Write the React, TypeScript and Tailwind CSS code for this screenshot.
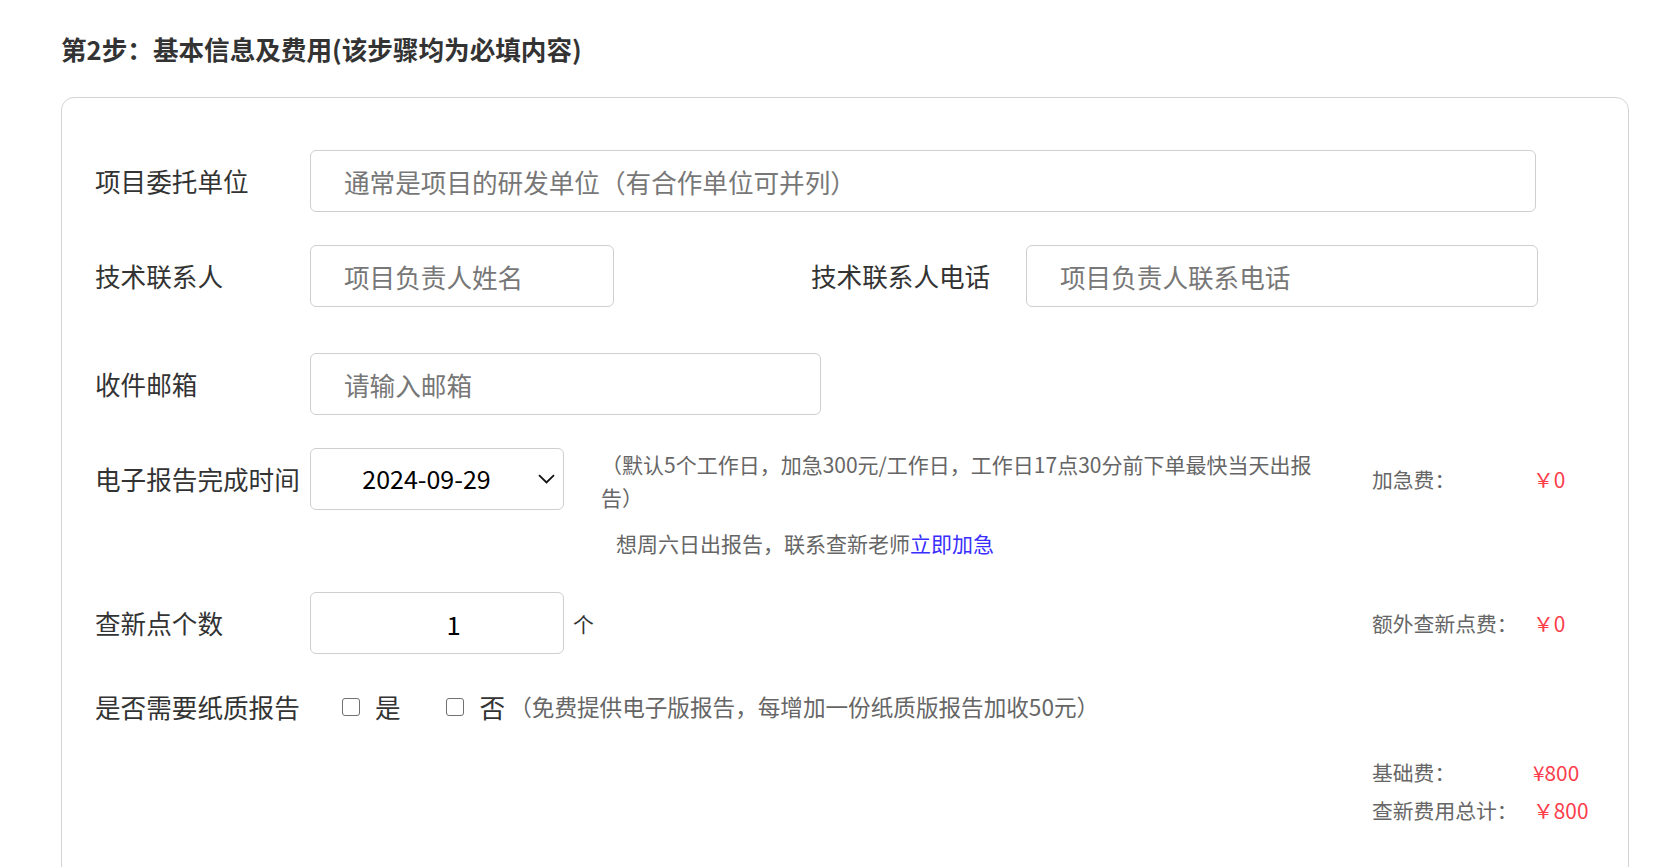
import React from "react";

const Label = ({ children }: { children: React.ReactNode }) => (
  <div className="w-[215px] shrink-0 text-[25.6px] text-[#333]">{children}</div>
);

const Field = ({ placeholder, width }: { placeholder: string; width: string }) => (
  <input
    type="text"
    placeholder={placeholder}
    className={`${width} h-[62px] shrink-0 rounded-[6px] border border-[#cfcfcf] bg-white pl-[33px] text-[25.6px] text-[#333] outline-none placeholder:text-[#777]`}
  />
);

const Fee = ({ label, value }: { label: string; value: string }) => (
  <div className="flex w-[256px] shrink-0 items-center text-[20.8px] leading-[38px]">
    <span className="w-[161px] shrink-0 text-[#666]">{label}</span>
    <span className="text-[#fc3d4c]">{value}</span>
  </div>
);

const Box = () => (
  <span className="inline-block h-[18px] w-[18px] shrink-0 rounded-[3px] border-[1.5px] border-[#707070] bg-white" />
);

export default function App() {
  return (
    <div className="min-h-screen bg-white font-['Noto_Sans_CJK_SC','Noto_Sans',sans-serif] text-[#333]">
      <div className="pl-[61px] pt-[30px]">
        <h2 className="text-[25.6px] font-bold leading-[38px] text-[#333]">
          第2步：基本信息及费用(该步骤均为必填内容)
        </h2>

        <div className="mt-[29px] h-[820px] w-[1568px] rounded-[13px] border border-[#d4d4d4] pl-[33px] pt-[52px]">
          {/* 委托单位 */}
          <div className="flex h-[62px] items-center">
            <Label>项目委托单位</Label>
            <Field placeholder="通常是项目的研发单位（有合作单位可并列）" width="w-[1226px]" />
          </div>

          {/* 联系人 */}
          <div className="mt-[33px] flex h-[62px] items-center">
            <Label>技术联系人</Label>
            <Field placeholder="项目负责人姓名" width="w-[304px]" />
            <div className="ml-[197px]">
              <Label>技术联系人电话</Label>
            </div>
            <Field placeholder="项目负责人联系电话" width="w-[512px]" />
          </div>

          {/* 邮箱 */}
          <div className="mt-[46px] flex h-[62px] items-center">
            <Label>收件邮箱</Label>
            <Field placeholder="请输入邮箱" width="w-[511px]" />
          </div>

          {/* 完成时间 */}
          <div className="mt-[33px] flex items-start">
            <div className="flex h-[62px] items-center">
              <Label>电子报告完成时间</Label>
              <div className="flex h-[62px] w-[254px] items-center rounded-[6px] border border-[#cfcfcf] bg-white">
                <span className="flex-1 pl-[4px] text-center text-[25px] text-black">2024-09-29</span>
                <svg width="17" height="10" viewBox="0 0 17 10" className="mr-[8px]">
                  <path d="M1 1.2l7.5 7.3 7.5-7.3" fill="none" stroke="#111" strokeWidth="1.8" />
                </svg>
              </div>
            </div>
            <div className="ml-[37px] w-[735px] text-[21px] leading-[33px] text-[#666]">
              （默认5个工作日，加急300元/工作日，工作日17点30分前下单最快当天出报
              <br />
              告）
            </div>
            <div className="flex h-[62px] flex-1 items-center justify-end">
              <Fee label="加急费：" value="￥0" />
            </div>
          </div>

          <div className="mt-[13px] pl-[521px] text-[21px] leading-[33px] text-[#666]">
            想周六日出报告，联系查新老师<span className="cursor-pointer text-[#3a2eff]">立即加急</span>
          </div>

          {/* 查新点 */}
          <div className="mt-[32px] flex h-[62px] items-center">
            <Label>查新点个数</Label>
            <input
              type="text"
              defaultValue="1"
              className="h-[62px] w-[254px] shrink-0 rounded-[6px] border border-[#cfcfcf] bg-white pl-[33px] text-center text-[25.6px] text-black outline-none"
            />
            <span className="ml-[9px] mt-[3px] text-[20.8px] text-[#333]">个</span>
            <div className="flex flex-1 justify-end">
              <Fee label="额外查新点费：" value="￥0" />
            </div>
          </div>

          {/* 纸质报告 */}
          <div className="mt-[33px] flex h-[40px] items-center">
            <Label>是否需要纸质报告</Label>
            <label className="ml-[32px] flex items-center">
              <Box />
              <span className="ml-[15px] text-[25.6px] text-[#333]">是</span>
            </label>
            <label className="ml-[45px] flex items-center">
              <Box />
              <span className="ml-[16px] text-[25.6px] text-[#333]">否</span>
            </label>
            <span className="ml-[4px] text-[22.6px] text-[#666]">
              （免费提供电子版报告，每增加一份纸质版报告加收50元）
            </span>
          </div>

          {/* 合计 */}
          <div className="mt-[26px] flex justify-end">
            <div>
              <Fee label="基础费：" value="¥800" />
              <Fee label="查新费用总计：" value="￥800" />
            </div>
          </div>
        </div>
      </div>
    </div>
  );
}
